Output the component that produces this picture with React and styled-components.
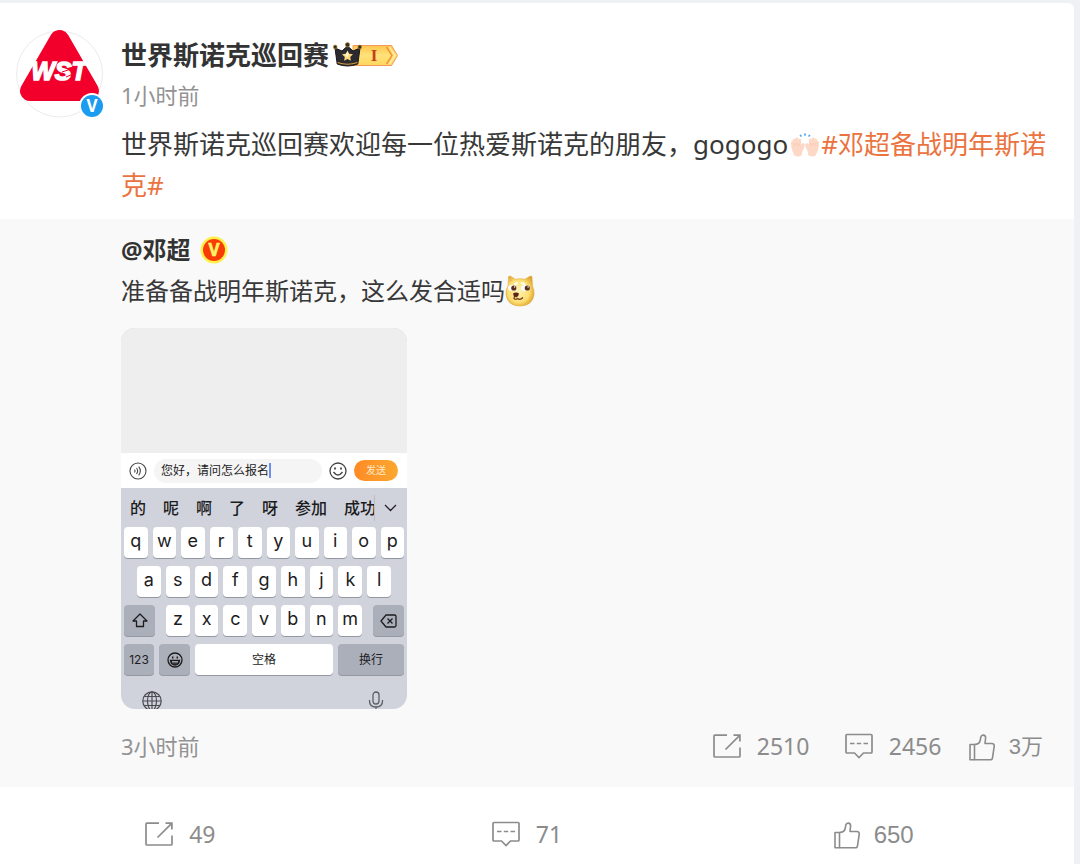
import React from 'react';
import styled, { createGlobalStyle, css } from 'styled-components';

const GlobalStyle = createGlobalStyle`
  * {
    box-sizing: border-box;
  }

  body {
    margin: 0;
    background: #f0f1f5;
    color: #383838;
    font-family: 'Noto Sans', 'Noto Sans CJK SC', sans-serif;
  }

  button,
  input {
    margin: 0;
    padding: 0;
    border: 0;
    background: none;
    color: inherit;
    font: inherit;
  }

  svg {
    display: block;
    flex: none;
  }
`;

const Page = styled.main`
  display: flex;
  min-height: 100vh;
  padding: 3px 6px 0 0;
`;

const Card = styled.article`
  flex: 1;
  min-width: 0;
  background: #fff;
  border-top-right-radius: 6px;
`;

const Post = styled.header`
  display: grid;
  grid-template-columns: 92px 1fr;
  column-gap: 13px;
  padding: 27px 24px 13px 16px;
`;

const PostBody = styled.div`
  padding-top: 7px;
`;

const NameRow = styled.div`
  display: flex;
  align-items: center;
  gap: ${({ $wide }) => ($wide ? 9 : 4)}px;
  height: 36px;
`;

const Name = styled.a`
  color: #333;
  font-size: ${({ $small }) => ($small ? 24 : 26)}px;
  font-weight: 700;
  line-height: 36px;
  text-decoration: none;
`;

const Time = styled.a`
  display: block;
  color: #939393;
  font-size: 22px;
  line-height: 32px;
  text-decoration: none;
`;

const PostTime = styled(Time)`
  margin-top: 6px;
`;

const Text = styled.p`
  margin: 13px 0 0;
  font-size: 26px;
  line-height: 41px;

  svg {
    display: inline-block;
    margin: 0 2px 0 3px;
    vertical-align: -4px;
  }
`;

const Topic = styled.a`
  color: #eb7340;
  text-decoration: none;
`;

const Quote = styled.section`
  padding: 13px 31px 24px 121px;
  background: #f9f9f9;
`;

const QuoteText = styled.p`
  display: flex;
  align-items: center;
  margin: 2px 0 17px;
  font-size: 24px;
  line-height: 41px;
`;

const QuoteFooter = styled.div`
  display: flex;
  justify-content: space-between;
  align-items: center;
  margin-top: 20px;
`;

const QuoteStats = styled.div`
  display: grid;
  grid-template-columns: 132px 124px auto;
`;

const Stat = styled.button`
  display: flex;
  align-items: center;
  gap: ${({ $tight }) => ($tight ? 14 : 16)}px;
  color: #8c8c8c;
  font-size: 23px;
  line-height: 32px;
  cursor: pointer;

  ${({ $tight }) =>
    $tight &&
    css`
      font-family: 'Liberation Sans', 'Noto Sans CJK SC', sans-serif;
      font-size: ${({ $small }) => ($small ? 22 : 24)}px;
      padding-top: 2px;
    `}
`;

const Actions = styled.footer`
  display: grid;
  grid-template-columns: repeat(3, 1fr);
  justify-items: center;
  padding: 30px 27px 12px 7px;
`;

// Attached photo: a phone screen with the keyboard open
const Shot = styled.div`
  width: 286px;
  height: 381px;
  overflow: hidden;
  border-radius: 14px;
  background: #d1d3dc;
`;

const ShotBlank = styled.div`
  height: 125px;
  background: #eee;
`;

const InputBar = styled.div`
  display: flex;
  align-items: center;
  gap: 7px;
  height: 35px;
  padding: 0 9px 0 8px;
  background: #fff;
`;

const InputBox = styled.label`
  display: flex;
  flex: 1;
  align-items: center;
  height: 24px;
  padding-left: 7px;
  border-radius: 12px;
  background: #f5f5f5;

  input {
    width: 108px;
    color: #222;
    font-size: 12px;
    line-height: 16px;
    outline: 0;
  }
`;

const Caret = styled.span`
  width: 2px;
  height: 15px;
  background: #6f8cf0;
`;

const Send = styled.button`
  width: 44px;
  height: 21px;
  border-radius: 11px;
  background: linear-gradient(90deg, #ff8a26, #fba82f);
  color: #ffe9c8;
  font-size: 10px;
  line-height: 21px;
`;

const Suggestions = styled.div`
  display: flex;
  align-items: center;
  height: 39px;
  padding: 0 9px;
`;

const Words = styled.div`
  display: flex;
  gap: 17px;
  width: 245px;
  overflow: hidden;
  border-right: 1px solid #b9bcc5;
  color: #1c1c1e;
  font-size: 16px;
  font-weight: 500;
  line-height: 26px;

  button {
    flex: none;
  }
`;

const Fold = styled.button`
  margin-left: 9px;
`;

const Keys = styled.div`
  display: grid;
  gap: 8px;
  padding: 0 3px;
`;

const KeyRow = styled.div`
  display: grid;
  grid-template-columns: ${({ $columns }) => $columns};
  gap: 5px;
  padding: 0 ${({ $inset = 0 }) => $inset}px;
`;

const Letters = styled.div`
  display: grid;
  grid-template-columns: repeat(7, 1fr);
  gap: 5px;
  padding: 0 6px;
`;

const Key = styled.button`
  display: flex;
  justify-content: center;
  align-items: center;
  height: 31px;
  border-radius: 4px;
  background: ${({ $dark }) => ($dark ? '#abafba' : '#fff')};
  box-shadow: 0 1px 0 #9498a3;
  color: #1c1c1e;
  font-family: Inter, 'Noto Sans CJK SC', sans-serif;
  font-size: ${({ $label }) => ($label ? 12 : 18)}px;
  line-height: 24px;
  padding-bottom: ${({ $label }) => ($label ? 0 : 3)}px;
`;

const BottomBar = styled.div`
  display: flex;
  justify-content: space-between;
  padding: 16px 23px 0 21px;
`;

const Avatar = () => (
  <svg width="92" height="92" viewBox="0 0 92 92" role="img" aria-label="WST">
    <circle cx="43.5" cy="44" r="43" fill="#fff" stroke="#ebebeb" />
    <path
      d="M43.5 10 L14 61 H73 Z"
      fill="#f2002b"
      stroke="#f2002b"
      strokeWidth="20"
      strokeLinejoin="round"
    />
    <text
      x="43"
      y="50"
      textAnchor="middle"
      fill="#fff"
      stroke="#fff"
      strokeWidth="1.5"
      fontFamily="Liberation Sans, sans-serif"
      fontSize="25"
      fontStyle="italic"
      fontWeight="700"
    >
      WST
    </text>
    <path d="M46 42 L55 39 M50 47 L57 44" stroke="#f2002b" strokeWidth="1" />
    <circle cx="76" cy="76" r="13" fill="#fff" />
    <circle cx="76" cy="76" r="11" fill="#1a9cf0" />
    <text
      x="76"
      y="82"
      textAnchor="middle"
      fill="#fff"
      fontFamily="Noto Sans, sans-serif"
      fontSize="17"
      fontWeight="700"
    >
      V
    </text>
  </svg>
);

const LevelBadge = () => (
  <svg width="68" height="26" viewBox="0 0 68 26" role="img" aria-label="VIP I">
    <defs>
      <linearGradient id="gold" x1="0" x2="0" y1="0" y2="1">
        <stop offset="0" stopColor="#ffc64e" />
        <stop offset=".5" stopColor="#ffe27a" />
        <stop offset="1" stopColor="#ffd65e" />
      </linearGradient>
    </defs>
    <path d="M20 3.5 H58.5 L64.5 13.5 L58.5 23.5 H20 Z" fill="url(#gold)" stroke="#f2995a" />
    <path d="M53.5 5 L59 13.5 L53.5 22" fill="none" stroke="#ef9138" strokeWidth="1.4" />
    <path d="M56.5 5 L62 13.5 L56.5 22" fill="none" stroke="#fff0a8" strokeWidth="1.2" />
    <path
      d="M2 6 L9 9 L14.500 4 L20 9 L27 6 L24.800 22 Q14.500 26 4.200 22 Z"
      fill="#2b2a30"
      stroke="#17161a"
      strokeLinejoin="round"
    />
    <path d="M4.500 20.500 Q14.500 24 24.500 20.500" fill="none" stroke="#d89b3c" strokeWidth="1.2" />
    <circle cx="2.2" cy="5" r="1.9" fill="#3a3020" stroke="#b88830" strokeWidth=".6" />
    <circle cx="14.5" cy="2.8" r="2.2" fill="#3a3020" stroke="#b88830" strokeWidth=".6" />
    <circle cx="26.8" cy="5" r="1.9" fill="#3a3020" stroke="#b88830" strokeWidth=".6" />
    <path
      d="M14.5 8.5 L16.2 11.8 L20 12.3 L17.2 15 L17.9 18.7 L14.5 17 L11.1 18.7 L11.8 15 L9 12.300 L12.8 11.8 Z"
      fill="#ffd978"
    />
    <path d="M14.5 10 L15.8 12.8 L14.5 15.5 L12 13 Z" fill="#fff6d8" />
    <text
      x="41"
      y="19"
      textAnchor="middle"
      fill="#c2401c"
      fontFamily="Liberation Serif, serif"
      fontSize="17"
      fontWeight="700"
    >
      I
    </text>
  </svg>
);

const VerifiedBadge = () => (
  <svg width="28" height="28" viewBox="0 0 28 28" role="img" aria-label="V">
    <circle cx="14" cy="14" r="13.5" fill="#fff14a" />
    <circle cx="14" cy="14" r="11" fill="#f93b05" />
    <text
      x="14"
      y="20"
      textAnchor="middle"
      fill="#fff266"
      stroke="#fff266"
      strokeWidth=".6"
      fontFamily="Noto Sans, sans-serif"
      fontSize="17"
      fontWeight="700"
    >
      V
    </text>
  </svg>
);

// Palm with the thumb towards the middle of the pair
const Hand = props => (
  <g {...props}>
    <path
      d="M3.600 24 Q1.500 20 .8 16.500 L.4 12 Q.5 10.600 1.600 11 L2.400 14 L2 9.500 Q2.200 8 3.500 8.500 L4.400 13 L4.600 8 Q5 6.600 6.300 7.300 L6.800 13 L7.600 8.800 Q8.400 7.600 9.300 8.800 L9.200 15.500 L11 13 Q12.800 12.300 13 14 Q12.600 17.500 10.800 19.500 L9.800 24 Q6.500 26 3.600 24 Z"
      fill="#fdd8c6"
      stroke="#fdd8c6"
      strokeWidth="1.2"
      strokeLinejoin="round"
    />
    <path d="M2.800 12 L3.200 15 M5.400 12 L5.400 15 M8 12 L7.700 15" stroke="#f4bfa8" strokeWidth=".6" fill="none" />
  </g>
);

const HandsEmoji = () => (
  <svg width="28" height="26" viewBox="0 0 28 26" role="img" aria-label="🙌🏻">
    <Hand transform="translate(.2 -1)" />
    <Hand transform="translate(27.8 -1) scale(-1 1)" />
    <g stroke="#4aa3ef" strokeWidth="1.7" strokeLinecap="round">
      <path d="M9.500 3.500 L10 4 M14 2 V3 M18.500 3.500 L18 4" />
    </g>
  </svg>
);

const DogeEmoji = () => (
  <svg width="30" height="32" viewBox="0 0 30 32" role="img" aria-label="[doge]">
    <defs>
      <radialGradient id="fur" cx=".45" cy=".5" r=".58">
        <stop offset="0" stopColor="#fff3b8" />
        <stop offset=".65" stopColor="#fcdf72" />
        <stop offset="1" stopColor="#dfa32c" />
      </radialGradient>
    </defs>
    <path
      d="M3 11 L3.500 2 Q4 .6 5.500 1.200 L10.500 4.200 Q15 3.200 20 4.200 L25 1.200 Q26.800 .6 27 2 L27.500 11 Q29.500 15 29 20 Q27 31 15 31 Q3 31 1 20 Q.5 15 3 11 Z"
      fill="url(#fur)"
      stroke="#e0ad40"
      strokeWidth=".6"
    />
    <path d="M5 3.500 L8 5 L5.500 7 Z M25.500 3.500 L22.500 5 L25.500 7 Z" fill="#edb65e" />
    <ellipse cx="11" cy="8.5" rx="2.6" ry="1.3" fill="#fffbe6" transform="rotate(-20 11 8.5)" />
    <ellipse cx="18" cy="8.5" rx="2.6" ry="1.3" fill="#fffbe6" transform="rotate(20 18 8.5)" />
    <ellipse cx="7.5" cy="13" rx="4.4" ry="3" fill="#fff" />
    <ellipse cx="20.5" cy="13" rx="4.6" ry="3" fill="#fff" />
    <circle cx="8.8" cy="13" r="2.6" fill="#5a2f1b" />
    <circle cx="22.3" cy="13" r="2.6" fill="#5a2f1b" />
    <circle cx="9.6" cy="12" r=".7" fill="#fff" />
    <circle cx="23.1" cy="12" r=".7" fill="#fff" />
    <path d="M8 18.500 Q11 16.500 14 18.500 Q14 21 11 22.500 Q8 21 8 18.500 Z" fill="#5b2417" />
    <path d="M9.500 21 L9 23.500 Q10.500 25 12.500 23.500 Q15 25.500 18 22.500" fill="none" stroke="#6d321d" strokeWidth="1.2" />
  </svg>
);

const RepostIcon = () => (
  <svg width="28" height="24" viewBox="0 0 28 24" fill="none" stroke="currentColor" strokeWidth="1.7">
    <path d="M14 1.2 H2 Q1 1.2 1 2.2 V22 Q1 23 2 23 H26 Q27 23 27 22 V13.5" />
    <path d="M20.5 1.2 H26.9 V7.5 M26.5 1.6 L12.5 15.5" />
  </svg>
);

const CommentIcon = () => (
  <svg width="28" height="26" viewBox="0 0 28 26" fill="none" stroke="currentColor" strokeWidth="1.7">
    <path d="M2 1.5 H26 Q27 1.5 27 2.5 V19 Q27 20 26 20 H18.5 L14 24.5 L9.5 20 H2 Q1 20 1 19 V2.5 Q1 1.5 2 1.5 Z" />
    <path d="M5 10.5 H9.5 M11.8 10.5 H16.2 M18.5 10.5 H23" />
  </svg>
);

const LikeIcon = () => (
  <svg width="26" height="27" viewBox="0 0 26 27" fill="none" stroke="currentColor" strokeWidth="1.6" strokeLinejoin="round">
    <path d="M5.500 10.500 H1 V25.800 H5.500" />
    <path d="M5.500 10.500 Q10.500 10.500 11.300 6 L11.800 3 Q12.300 1 14.300 1.100 Q16.700 1.400 16.600 4 L16 9.500 H22.800 Q25.500 9.700 25.200 12.300 L23.500 23.800 Q23.200 25.800 21.200 25.800 H5.500 Z" />
  </svg>
);

const VoiceIcon = () => (
  <svg width="18" height="18" viewBox="0 0 18 18" fill="none" stroke="#444" strokeWidth="1.1">
    <circle cx="9" cy="9" r="8" />
    <path d="M5.500 7.500 Q6.700 9 5.500 10.500 M7.500 6 Q9.800 9 7.500 12 M9.700 4.700 Q13 9 9.700 13.300" />
  </svg>
);

const SmileIcon = () => (
  <svg width="18" height="18" viewBox="0 0 18 18" fill="none" stroke="#444" strokeWidth="1.3">
    <circle cx="9" cy="9" r="8" />
    <path d="M6 5.500 V7.500 M12 5.500 V7.500" strokeWidth="1.8" />
    <path d="M4.500 10 Q9 16 13.500 10" />
  </svg>
);

const ChevronIcon = () => (
  <svg width="13" height="8" viewBox="0 0 13 8" fill="none" stroke="#222" strokeWidth="1.3">
    <path d="M1 1 L6.5 6.5 L12 1" />
  </svg>
);

const ShiftIcon = () => (
  <svg width="16" height="15" viewBox="0 0 16 15" fill="none" stroke="#1c1c1e" strokeWidth="1.3" strokeLinejoin="round">
    <path d="M8 1 L15 8 H11.5 V13.5 H4.5 V8 H1 Z" />
  </svg>
);

const DeleteIcon = () => (
  <svg width="17" height="14" viewBox="0 0 17 14" fill="none" stroke="#1c1c1e" strokeWidth="1.3" strokeLinejoin="round">
    <path d="M6 1 H14.5 Q16 1 16 2.5 V11.5 Q16 13 14.5 13 H6 L1 7 Z" />
    <path d="M7.5 4.5 L12.5 9.5 M12.5 4.5 L7.5 9.5" />
  </svg>
);

const GrinIcon = () => (
  <svg width="16" height="16" viewBox="0 0 16 16" fill="none" stroke="#1c1c1e" strokeWidth="1.3">
    <circle cx="8" cy="8" r="7" />
    <path d="M5.7 4.5 V6.5 M10.3 4.5 V6.5" strokeWidth="1.5" />
    <path d="M3.5 8.5 H12.5 Q12 13 8 13 Q4 13 3.5 8.5 Z" fill="#3a3c42" />
    <path d="M5 9.8 H11" stroke="#d1d3dc" strokeWidth="1" />
  </svg>
);

const GlobeIcon = () => (
  <svg width="20" height="20" viewBox="0 0 20 20" fill="none" stroke="#4a4c52" strokeWidth="1.2">
    <circle cx="10" cy="10" r="9.2" />
    <ellipse cx="10" cy="10" rx="4.5" ry="9.2" />
    <path d="M10 1 V19 M1 10 H19 M2.5 5.5 H17.5 M2.5 14.5 H17.5" />
  </svg>
);

const MicIcon = () => (
  <svg width="16" height="22" viewBox="0 0 16 22" fill="none" stroke="#5c5e64" strokeWidth="1.3">
    <rect x="5" y="1" width="6" height="12" rx="3" />
    <path d="M1.5 9 V10 Q1.5 16 8 16 Q14.5 16 14.5 10 V9 M8 16 V21 M4.5 21 H11.5" />
  </svg>
);

const words = ['的', '呢', '啊', '了', '呀', '参加', '成功'];

const renderKeys = letters => letters.split('').map(letter => <Key key={letter}>{letter}</Key>);

const KeyboardShot = () => (
  <Shot>
    <ShotBlank />
    <InputBar>
      <VoiceIcon />
      <InputBox>
        <input aria-label="私信" defaultValue="您好，请问怎么报名" />
        <Caret />
      </InputBox>
      <SmileIcon />
      <Send>发送</Send>
    </InputBar>
    <Suggestions>
      <Words>
        {words.map(word => (
          <button key={word}>{word}</button>
        ))}
      </Words>
      <Fold aria-label="展开">
        <ChevronIcon />
      </Fold>
    </Suggestions>
    <Keys>
      <KeyRow $columns="repeat(10, 1fr)">{renderKeys('qwertyuiop')}</KeyRow>
      <KeyRow $columns="repeat(9, 1fr)" $inset={13}>
        {renderKeys('asdfghjkl')}
      </KeyRow>
      <KeyRow $columns="31px 1fr 31px">
        <Key $dark $label aria-label="shift">
          <ShiftIcon />
        </Key>
        <Letters>{renderKeys('zxcvbnm')}</Letters>
        <Key $dark $label aria-label="delete">
          <DeleteIcon />
        </Key>
      </KeyRow>
      <KeyRow $columns="30px 31px 1fr 66px">
        <Key $dark $label>
          123
        </Key>
        <Key $dark $label aria-label="emoji">
          <GrinIcon />
        </Key>
        <Key $label>空格</Key>
        <Key $dark $label>
          换行
        </Key>
      </KeyRow>
    </Keys>
    <BottomBar>
      <GlobeIcon />
      <MicIcon />
    </BottomBar>
  </Shot>
);

const App = () => (
  <>
    <GlobalStyle />
    <Page>
      <Card>
        <Post>
          <Avatar />
          <PostBody>
            <NameRow>
              <Name href="#user">世界斯诺克巡回赛</Name>
              <LevelBadge />
            </NameRow>
            <PostTime href="#post">1小时前</PostTime>
            <Text>
              世界斯诺克巡回赛欢迎每一位热爱斯诺克的朋友，gogogo
              <HandsEmoji />
              <Topic href="#topic">#邓超备战明年斯诺克#</Topic>
            </Text>
          </PostBody>
        </Post>

        <Quote>
          <NameRow $wide>
            <Name $small href="#quoted-user">
              @邓超
            </Name>
            <VerifiedBadge />
          </NameRow>
          <QuoteText>
            准备备战明年斯诺克，这么发合适吗
            <DogeEmoji />
          </QuoteText>
          <KeyboardShot />
          <QuoteFooter>
            <Time href="#quoted-post">3小时前</Time>
            <QuoteStats>
              <Stat>
                <RepostIcon />
                2510
              </Stat>
              <Stat>
                <CommentIcon />
                2456
              </Stat>
              <Stat $tight $small>
                <LikeIcon />
                3万
              </Stat>
            </QuoteStats>
          </QuoteFooter>
        </Quote>

        <Actions>
          <Stat>
            <RepostIcon />
            49
          </Stat>
          <Stat>
            <CommentIcon />
            71
          </Stat>
          <Stat $tight>
            <LikeIcon />
            650
          </Stat>
        </Actions>
      </Card>
    </Page>
  </>
);

export default App;
